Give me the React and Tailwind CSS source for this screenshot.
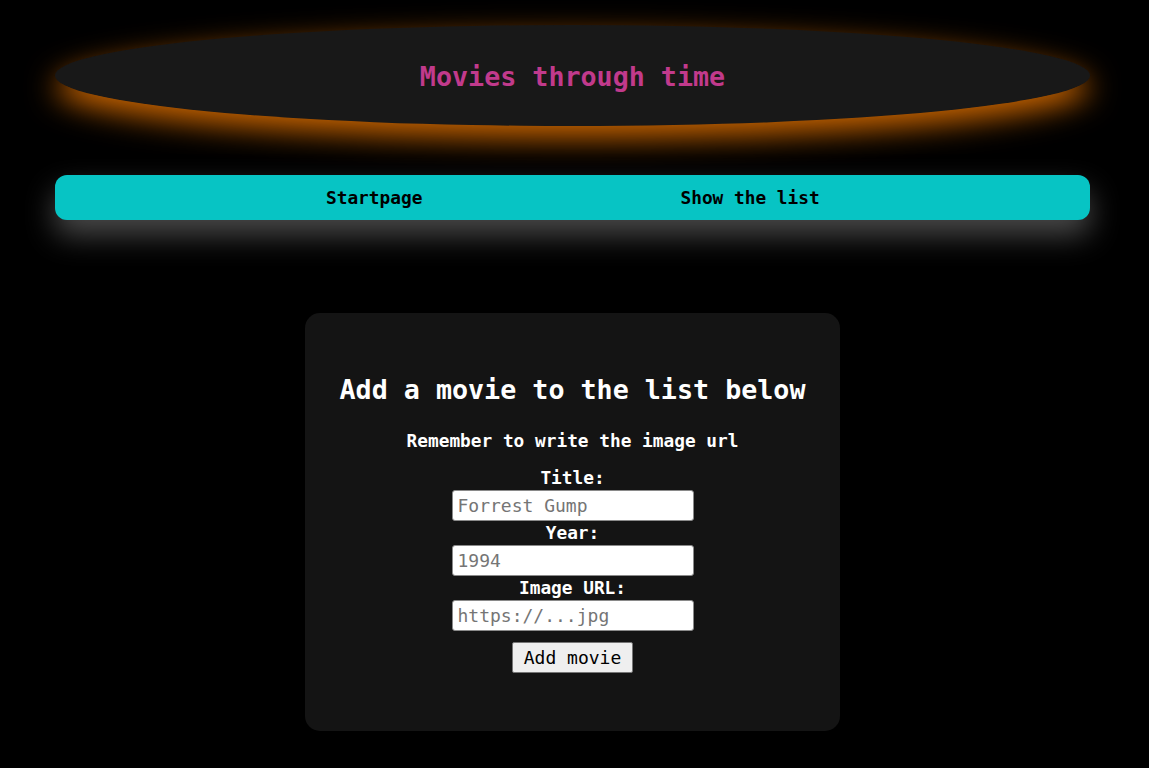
export default function App() {
  const mono = { fontFamily: '"DejaVu Sans Mono", "Liberation Mono", monospace' };
  return (
    <div className="min-h-[768px] w-full bg-black pl-[55px] pr-[59px] pt-[25px] pb-[37px]" style={mono}>
      <header className="flex h-[101px] items-center justify-center rounded-[50%] bg-[#181818] pt-[3px] shadow-[0_12px_30px_#c86400]">
        <h1 className="text-[26.7px] font-bold text-[#c13a8c] leading-none">Movies through time</h1>
      </header>
      <nav className="mt-[49px] flex h-[45px] items-center rounded-[12px] bg-[#07c4c4] pt-[1px] shadow-[0_15px_30px_#4a4a4a]">
        <div className="flex w-full">
          <a className="w-1/2 pl-[271px] text-[17.8px] font-bold text-black">Startpage</a>
          <a className="w-1/2 pl-[108px] text-[17.8px] font-bold text-black">Show the list</a>
        </div>
      </nav>
      <main className="mt-[93px] flex justify-center">
        <div className="flex w-[535px] flex-col items-center rounded-[15px] bg-[#141414] pt-[59px] pb-[58px] text-white">
          <h2 className="text-[26.7px] font-bold leading-[36px]">Add a movie to the list below</h2>
          <p className="mt-[21px] text-[17.8px] font-bold leading-[24px]">Remember to write the image url</p>
          <form className="mt-[13px] flex flex-col items-center" onSubmit={(e) => e.preventDefault()}>
            <label className="text-[17.8px] font-bold leading-[24px]">Title:</label>
            <input
              placeholder="Forrest Gump"
              className="h-[31px] w-[242px] rounded-[3px] border border-[#8a8a8a] bg-white px-[5px] text-[18px] text-black placeholder:text-[#757575]"
              style={mono}
            />
            <label className="text-[17.8px] font-bold leading-[24px]">Year:</label>
            <input
              placeholder="1994"
              className="h-[31px] w-[242px] rounded-[3px] border border-[#8a8a8a] bg-white px-[5px] text-[18px] text-black placeholder:text-[#757575]"
              style={mono}
            />
            <label className="text-[17.8px] font-bold leading-[24px]">Image URL:</label>
            <input
              placeholder="https://...jpg"
              className="h-[31px] w-[242px] rounded-[3px] border border-[#8a8a8a] bg-white px-[5px] text-[18px] text-black placeholder:text-[#757575]"
              style={mono}
            />
            <button
              type="submit"
              className="mt-[11px] h-[31px] w-[121px] rounded-[2px] border border-[#767676] bg-[#efefef] text-[18px] text-black"
              style={mono}
            >
              Add movie
            </button>
          </form>
        </div>
      </main>
    </div>
  );
}
